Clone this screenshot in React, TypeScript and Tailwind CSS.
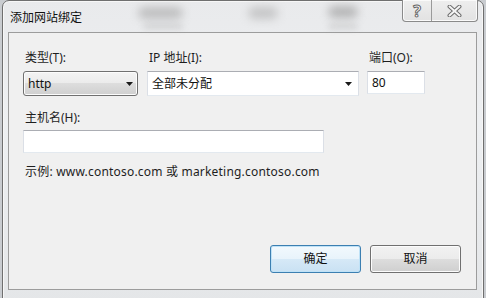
const font = "font-['Noto_Sans','Noto_Sans_CJK_SC',sans-serif]";

const Arrow = () => (
  <svg width="7" height="4" viewBox="0 0 7 4" className="shrink-0">
    <path d="M0 0h7L3.5 4z" fill="#1a1a1a" />
  </svg>
);

const Label = ({ children }: { children: React.ReactNode }) => (
  <div className="h-4 pl-[2px] text-[12px] leading-4 text-[#1e1e1e]">{children}</div>
);

const CloseGlyph = () => (
  <svg width="15" height="12" viewBox="0 0 15 12">
    <path d="M2.5 1.5L12.5 10.5M12.5 1.5L2.5 10.5" stroke="#6d6d6d" strokeWidth="4" strokeLinecap="round" />
    <path d="M2.5 1.5L12.5 10.5M12.5 1.5L2.5 10.5" stroke="#f4f4f4" strokeWidth="2" strokeLinecap="round" />
  </svg>
);

export default function App() {
  return (
    <div className={`${font} w-[486px] h-[298px] overflow-hidden bg-[#c9ccd0]`}>
      <div className="relative ml-[2px] w-[482px] h-[306px] rounded-t-[7px] border border-[#6f6f6f] bg-[linear-gradient(180deg,#e9eaec,#eef0f2_40%,#e4e6e8)] shadow-[inset_0_0_0_1px_#f7f7f7]">
        {/* blurred glass blobs */}
        <div className="absolute left-[135px] top-[6px] h-[12px] w-[45px] rounded-full bg-[#a0a0a0] opacity-60 blur-[5px]" />
        <div className="absolute left-[245px] top-[6px] h-[12px] w-[30px] rounded-full bg-[#a0a0a0] opacity-50 blur-[5px]" />
        <div className="absolute left-[325px] top-[5px] h-[12px] w-[30px] rounded-full bg-[#909090] opacity-60 blur-[5px]" />
        <div className="absolute left-[140px] top-[23px] h-[5px] w-[40px] rounded-full bg-[#a8a8a8] opacity-40 blur-[3px]" />
        <div className="absolute left-[325px] top-[23px] h-[5px] w-[30px] rounded-full bg-[#a8a8a8] opacity-40 blur-[3px]" />

        {/* title bar */}
        <div className="relative flex h-[31px]">
          <div className="pl-[7px] pt-[9px] text-[12px] leading-4 text-[#111]">添加网站绑定</div>
          <div className="ml-auto mr-[5px] flex h-[22px] -mt-px overflow-hidden rounded-b-[4px] border border-t-0 border-[#8a8a8a] bg-[linear-gradient(180deg,#eeeeee,#e2e2e2)] shadow-[inset_0_0_0_1px_#fafafa]">
            <div className="flex w-[29px] items-center justify-center border-r border-[#9a9a9a] text-[16px] font-bold leading-none text-white [-webkit-text-stroke:1px_#666]">
              ?
            </div>
            <div className="flex w-[45px] items-center justify-center">
              <CloseGlyph />
            </div>
          </div>
        </div>

        {/* client area */}
        <div className="ml-[5px] flex h-[258px] w-[469px] flex-col border border-[#9c9c9c] bg-[#f0f0f0] pl-[14px] pr-[15px] pt-[17px] pb-[16px]">
          <div className="flex gap-[9px]">
            <div className="flex w-[115px] flex-col gap-[5px]">
              <Label>类型(T):</Label>
              <div className="flex h-[25px] items-center justify-between rounded-[3px] border border-[#707070] bg-[linear-gradient(180deg,#f3f3f3,#ebebeb_50%,#dddddd_50%,#cfcfcf)] pl-[4px] pr-[4px] shadow-[inset_0_0_0_1px_#fcfcfc]">
                <span className="text-[12px] leading-4 text-[#111]">http</span>
                <Arrow />
              </div>
            </div>
            <div className="flex w-[212px] flex-col gap-[5px]">
              <Label>IP 地址(I):</Label>
              <div className="flex h-[25px] items-center justify-between border border-[#abadb3] border-x-[#dbdfe6] border-b-[#e3e9ef] bg-white pl-[4px] pr-[6px]">
                <span className="text-[12px] leading-4 text-[#111]">全部未分配</span>
                <Arrow />
              </div>
            </div>
            <div className="ml-[-1px] flex w-[58px] flex-col gap-[5px]">
              <Label>端口(O):</Label>
              <div className="flex h-[23px] items-center border border-[#abadb3] border-x-[#dbdfe6] border-b-[#e3e9ef] bg-white pl-[4px]">
                <span className="text-[12px] leading-4 text-[#111]">80</span>
              </div>
            </div>
          </div>

          <div className="mt-[14px] flex flex-col gap-[4px]">
            <Label>主机名(H):</Label>
            <div className="h-[23px] w-[301px] border border-[#abadb3] border-x-[#dbdfe6] border-b-[#e3e9ef] bg-white" />
          </div>

          <div className="mt-[11px] pl-[2px] text-[12px] leading-4 tracking-[0.2px] text-[#1e1e1e]">
            示例: www.contoso.com 或 marketing.contoso.com
          </div>

          <div className="mt-auto flex justify-end gap-[9px]">
            <div className="flex h-[28px] w-[91px] items-center justify-center rounded-[3px] border border-[#3c7fb1] bg-[linear-gradient(180deg,#f2f9fd,#e8f3fb_50%,#d6e9f7_50%,#c9e1f3)] text-[12px] text-[#111] shadow-[inset_0_0_0_1px_#bfe2f7]">
              确定
            </div>
            <div className="flex h-[28px] w-[91px] items-center justify-center rounded-[3px] border border-[#707070] bg-[linear-gradient(180deg,#f2f2f2,#ebebeb_50%,#dddddd_50%,#cfcfcf)] text-[12px] text-[#111] shadow-[inset_0_0_0_1px_#fcfcfc]">
              取消
            </div>
          </div>
        </div>
      </div>
    </div>
  );
}
